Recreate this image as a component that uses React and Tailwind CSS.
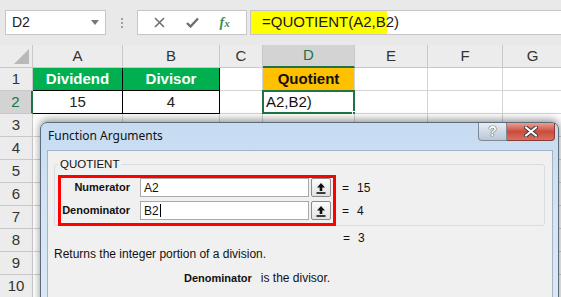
import React from "react";

const cols = [
  { key: "A", w: "w-[90px]" },
  { key: "B", w: "w-[97px]" },
  { key: "C", w: "w-[43px]" },
  { key: "D", w: "w-[92px]" },
  { key: "E", w: "w-[73px]" },
  { key: "F", w: "w-[75px]" },
  { key: "G", w: "w-[60px]" },
];

const rows = [1, 2, 3, 4, 5, 6, 7, 8, 9, 10];

const UpButton = () => (
  <div className="w-[20px] h-[19px] ml-[2px] border border-[#8a8a8a] rounded-[2px] bg-gradient-to-b from-[#fbfbfb] to-[#e3e3e3] flex items-center justify-center">
    <svg width="10" height="12" viewBox="0 0 10 12">
      <path d="M5 1 L9 5.5 H6.3 V9 H3.7 V5.5 H1 Z" fill="#111" />
      <rect x="0.5" y="10.2" width="9" height="1.6" fill="#111" />
    </svg>
  </div>
);

function Cell({ col, row }) {
  const id = col.key + row;
  const base = `${col.w} h-full shrink-0 border-r border-b flex items-center text-[15px] relative`;

  if (id === "A1" || id === "B1") {
    return (
      <div className={`${base} border-black bg-[#00b050] text-white font-bold justify-center`}>
        {id === "A1" ? "Dividend" : "Divisor"}
      </div>
    );
  }
  if (id === "A2" || id === "B2") {
    return (
      <div className={`${base} border-black bg-white text-[#222] justify-center`}>
        {id === "A2" ? "15" : "4"}
      </div>
    );
  }
  if (id === "D1") {
    return (
      <div className={`${base} border-[#d4d4d4] bg-[#ffc000] text-[#111] font-bold justify-center`}>
        Quotient
      </div>
    );
  }
  if (id === "D2") {
    return (
      <div className={`${base} border-[#d4d4d4] bg-white text-[#111] pl-[3px]`}>
        A2,B2)
        {/* selection frame */}
        <div className="absolute -left-[1px] -top-[1px] -right-[1px] -bottom-[1px] border-2 border-[#217346]" />
        <div className="absolute -right-[3px] -bottom-[3px] w-[5px] h-[5px] bg-[#217346] border border-white" />
      </div>
    );
  }
  return <div className={`${base} border-[#d4d4d4] bg-white`} />;
}

export default function App() {
  return (
    <div className="w-[561px] h-[297px] relative overflow-hidden bg-white font-['Liberation_Sans',Arial,sans-serif]">
      {/* name box + formula bar */}
      <div className="h-[45px] bg-[#e9e9e9] flex items-start pt-[10px]">
        <div className="ml-[5px] w-[101px] h-[25px] bg-white border border-[#c6c6c6] flex items-center pl-[6px] pr-[6px] text-[14px] text-[#222]">
          <span>D2</span>
          <svg className="ml-auto" width="8" height="5" viewBox="0 0 8 5">
            <path d="M0 0 H8 L4 5 Z" fill="#777" />
          </svg>
        </div>
        <div className="w-[31px] h-[25px] flex flex-col items-center justify-center gap-[2px]">
          <span className="w-[2px] h-[2px] bg-[#a0a0a0]" />
          <span className="w-[2px] h-[2px] bg-[#a0a0a0]" />
          <span className="w-[2px] h-[2px] bg-[#a0a0a0]" />
        </div>
        <div className="w-[110px] h-[25px] bg-white border border-[#c6c6c6] flex items-center justify-around px-[6px]">
          <svg width="11" height="11" viewBox="0 0 11 11">
            <path d="M1 1 L10 10 M10 1 L1 10" stroke="#6f6f6f" strokeWidth="1.6" />
          </svg>
          <svg width="13" height="11" viewBox="0 0 13 11">
            <path d="M1 6 L4.5 9.5 L12 1.5" stroke="#6f6f6f" strokeWidth="2.4" fill="none" />
          </svg>
          <span className="font-['Liberation_Serif',serif] italic text-[14px] text-[#3d8c5c] font-bold leading-none">
            f<span className="text-[11px]">x</span>
          </span>
        </div>
        <div className="ml-[3px] flex-1 h-[25px] bg-white border border-[#c6c6c6] border-r-0 flex items-stretch">
          <div className="w-[136px] bg-[#ffff00] flex items-center pl-[11px] text-[15px] text-[#1a1a1a]">
            =QUOTIENT(A2,B2)
          </div>
        </div>
      </div>

      {/* column headers */}
      <div className="h-[23px] flex bg-[#ececec] text-[15px] text-[#333]">
        <div className="w-[33px] shrink-0 relative border-r border-b border-[#c8c8c8]">
          <svg className="absolute right-[3px] bottom-[3px]" width="15" height="15" viewBox="0 0 15 15">
            <path d="M15 0 V15 H0 Z" fill="#b9b9b9" />
          </svg>
        </div>
        {cols.map((c) =>
          c.key === "D" ? (
            <div
              key={c.key}
              className={`${c.w} shrink-0 flex items-center justify-center bg-[#d3d3d3] text-[#217346] border-r border-[#c8c8c8] border-b-2 border-b-[#217346]`}
            >
              {c.key}
            </div>
          ) : (
            <div
              key={c.key}
              className={`${c.w} shrink-0 flex items-center justify-center border-r border-b border-[#c8c8c8]`}
            >
              {c.key}
            </div>
          )
        )}
      </div>

      {/* rows */}
      {rows.map((r) => (
        <div key={r} className="h-[23px] flex">
          {r === 2 ? (
            <div className="w-[33px] shrink-0 flex items-center justify-center bg-[#d3d3d3] text-[15px] text-[#217346] border-b border-[#c8c8c8] border-r-2 border-r-[#217346]">
              {r}
            </div>
          ) : (
            <div className="w-[33px] shrink-0 flex items-center justify-center bg-[#ececec] text-[15px] text-[#333] border-r border-b border-[#c8c8c8]">
              {r}
            </div>
          )}
          {cols.map((c) => (
            <Cell key={c.key} col={c} row={r} />
          ))}
        </div>
      ))}

      {/* Function Arguments dialog */}
      <div className="absolute left-[40px] top-[122px] w-[519px] h-[190px] rounded-t-[7px] border border-[#5e6b7a] bg-gradient-to-b from-[#c6dbf1] via-[#d5e5f6] to-[#dbe8f6] shadow-[0_-2px_9px_rgba(0,0,0,0.45)] z-10">
        <div className="h-[27px] flex items-start">
          <div className="pl-[7px] pt-[5px] text-[12px] text-[#111] font-['Noto_Sans',sans-serif] leading-[16px]">
            Function Arguments
          </div>
          <div className="ml-auto mr-[3px] flex">
            <div className="w-[29px] h-[18px] rounded-bl-[4px] border border-t-0 border-[#7f8a96] bg-gradient-to-b from-[#e6edf4] to-[#b9c7d5] flex items-center justify-center text-[14px] font-bold text-white [text-shadow:0_0_1px_#333,0_0_1px_#333]">
              ?
            </div>
            <div className="w-[48px] h-[18px] rounded-br-[4px] border border-t-0 border-l-0 border-[#8a3a32] bg-gradient-to-b from-[#e8a093] via-[#cb4b3c] to-[#d67060] flex items-center justify-center">
              <svg width="14" height="11" viewBox="0 0 14 11">
                <path d="M2 1.5 L12 9.5 M12 1.5 L2 9.5" stroke="#3b3b3b" strokeWidth="4" strokeLinecap="round" />
                <path d="M2 1.5 L12 9.5 M12 1.5 L2 9.5" stroke="#ffffff" strokeWidth="2.2" strokeLinecap="round" />
              </svg>
            </div>
          </div>
        </div>

        <div className="ml-[6px] mr-[5px] h-[160px] bg-[#f0f0f0] border border-[#a5b3c2] text-[12px] text-[#111] pt-[13px] pl-[6px]">
          {/* group box */}
          <div className="w-[491px] h-[62px] border border-[#d6dde3] rounded-[3px] relative flex items-start">
            <div className="absolute -top-[8px] left-[3px] px-[2px] bg-[#f0f0f0] text-[11.5px] leading-[14px]">
              QUOTIENT
            </div>
            <div className="ml-[3px] mt-[10px] w-[278px] h-[51px] border-[3px] border-[#ff0000] flex flex-col gap-[4px]">
              <div className="h-[19px] flex items-center">
                <div className="w-[69px] text-right font-bold text-[11px]">Numerator</div>
                <div className="ml-[10px] w-[169px] h-[19px] bg-white border border-[#a9a9a9] flex items-center pl-[3px]">
                  A2
                </div>
                <UpButton />
              </div>
              <div className="h-[19px] flex items-center">
                <div className="w-[69px] text-right font-bold text-[11px]">Denominator</div>
                <div className="ml-[10px] w-[169px] h-[19px] bg-white border border-[#a9a9a9] flex items-center pl-[3px]">
                  B2<span className="w-px h-[13px] bg-black ml-px" />
                </div>
                <UpButton />
              </div>
            </div>
            <div className="ml-[6px] mt-[13px] flex flex-col gap-[4px]">
              <div className="h-[19px] flex items-center">
                <span className="w-[15px]">=</span>15
              </div>
              <div className="h-[19px] flex items-center">
                <span className="w-[15px]">=</span>4
              </div>
            </div>
          </div>

          <div className="mt-[5px] h-[14px] pl-[289px] flex items-center">
            <span className="w-[15px]">=</span>3
          </div>
          <div className="mt-[2px] h-[14px] flex items-center">Returns the integer portion of a division.</div>
          <div className="mt-[10px] h-[14px] pl-[130px] flex items-center">
            <span className="font-bold text-[11px]">Denominator</span>
            <span className="ml-[9px]">is the divisor.</span>
          </div>
        </div>
      </div>
    </div>
  );
}
